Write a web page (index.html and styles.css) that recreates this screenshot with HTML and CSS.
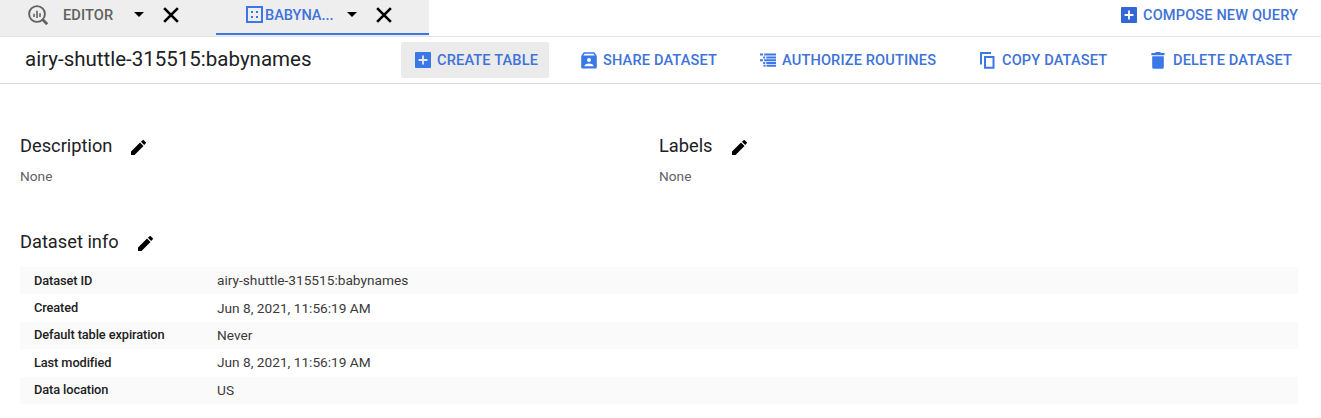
FILE: index.html
```html
<!DOCTYPE html>
<html lang="en">
<head>
<meta charset="utf-8">
<title>Dataset details</title>
<link rel="stylesheet" href="styles.css">
</head>
<body>
<svg class="sprite" width="0" height="0" aria-hidden="true">
  <symbol id="add" viewBox="3 3 18 18"><path fill-rule="evenodd" d="M4 3h16a1 1 0 0 1 1 1v16a1 1 0 0 1-1 1H4a1 1 0 0 1-1-1V4a1 1 0 0 1 1-1zM11 7v4H7v2h4v4h2v-4h4v-2h-4V7z"/></symbol>
  <symbol id="close" viewBox="5 5 14 14"><path d="M6 6l12 12M18 6L6 18" fill="none" stroke="currentColor" stroke-width="2.3"/></symbol>
  <symbol id="pencil" viewBox="3 3 18 18"><path d="M3 16.8V21h4.2L18 10.2 13.8 6 3 16.8zM20.71 7.04a1 1 0 0 0 0-1.41l-2.34-2.34a1 1 0 0 0-1.41 0L14.9 5.2l3.9 3.9 1.91-2.06z"/></symbol>
</svg>
<header class="tabbar">
  <div class="tab editor">
    <svg class="i-query" viewBox="0 0 20 20"><circle cx="9" cy="9" r="7.9" fill="none" stroke="currentColor" stroke-width="1.9"/><path d="M14.3 14.3l4.9 4.9" stroke="currentColor" stroke-width="2.7"/><path d="M6 8.8v3.1M9 5.8v7.2M12 8.2v3.7" stroke="currentColor" stroke-width="1.6"/></svg>
    <span class="label">EDITOR</span>
    <i class="caret"></i>
    <svg class="i-close"><use href="#close"/></svg>
  </div>
  <div class="tab active">
    <svg class="i-grid" viewBox="0 0 17 17"><rect x="1" y="1" width="15" height="15" fill="none" stroke="currentColor" stroke-width="2"/><path d="M5 5h2v2H5zM10 5h2v2h-2zM5 10h2v2H5zM10 10h2v2h-2z"/></svg>
    <span class="label">BABYNA...</span>
    <i class="caret"></i>
    <svg class="i-close"><use href="#close"/></svg>
  </div>
  <div class="compose"><svg class="i-add dark"><use href="#add"/></svg><span>COMPOSE NEW QUERY</span></div>
</header>
<div class="toolbar">
  <h1>airy-shuttle-315515:babynames</h1>
  <div class="btn create"><svg class="i-add"><use href="#add"/></svg><span>CREATE TABLE</span></div>
  <div class="btn share"><svg class="i-share" viewBox="0 0 16 17"><path fill-rule="evenodd" d="M1.2 3.6h13.6a1 1 0 0 1 1 1v10.6a1.4 1.4 0 0 1-1.4 1.4H1.6a1.4 1.4 0 0 1-1.4-1.4V4.6a1 1 0 0 1 1-1zM8 6a2 2 0 1 0 0 4 2 2 0 0 0 0-4zM3.6 14.2h8.8v-.7c0-1.3-2.8-2-4.4-2s-4.4.7-4.4 2z"/><path d="M1 4.2L3.2 1h9.6L15 4.2" fill="none" stroke="currentColor" stroke-width="1.5" stroke-linejoin="round"/></svg><span>SHARE DATASET</span></div>
  <div class="btn auth"><svg class="i-auth" viewBox="0 0 16 14"><path d="M0 .5h3v2H0zM4.2.5H16v2H4.2zM3.2 3.5h2v2h-2zM6.3 3.5H16v2H6.3zM0 6.3h3v2H0zM4.2 6.3H16v2H4.2zM3.2 9h2v2h-2zM6.3 9H16v2H6.3zM3.5 11.8h2v2h-2zM6.5 11.8H16v2H6.5z"/></svg><span>AUTHORIZE ROUTINES</span></div>
  <div class="btn copy"><svg class="i-copy" viewBox="0 0 15 17"><path d="M1 12.5V1h10M5 5h8.5V15.8H5z" fill="none" stroke="currentColor" stroke-width="2"/></svg><span>COPY DATASET</span></div>
  <div class="btn delete"><svg class="i-trash" viewBox="0 0 14 17"><path d="M1.2 4.2h11.6v11.1a1.5 1.5 0 0 1-1.5 1.5H2.7a1.5 1.5 0 0 1-1.5-1.5zM4.4 0h5.2v1h4v2.2H.4V1h4z"/></svg><span>DELETE DATASET</span></div>
</div>
<main>
  <div class="columns">
    <section><h2><span>Description</span><svg class="i-pencil"><use href="#pencil"/></svg></h2><p>None</p></section>
    <section><h2><span>Labels</span><svg class="i-pencil"><use href="#pencil"/></svg></h2><p>None</p></section>
  </div>
  <h2 class="info"><span>Dataset info</span><svg class="i-pencil"><use href="#pencil"/></svg></h2>
  <dl>
    <div><dt>Dataset ID</dt><dd>airy-shuttle-315515:babynames</dd></div>
    <div><dt>Created</dt><dd>Jun 8, 2021, 11:56:19 AM</dd></div>
    <div><dt>Default table expiration</dt><dd>Never</dd></div>
    <div><dt>Last modified</dt><dd>Jun 8, 2021, 11:56:19 AM</dd></div>
    <div><dt>Data location</dt><dd>US</dd></div>
  </dl>
</main>
</body>
</html>
```
FILE: styles.css
```css
* { box-sizing: border-box; }
body { margin: 0; height: 418px; overflow: hidden; background: #fff; color: #202124; font-family: Roboto, "Liberation Sans", sans-serif; white-space: nowrap; }
svg { display: block; flex: none; fill: currentColor; }
.sprite { position: absolute; }
h1, h2, p, dl, dd, dt { margin: 0; font-weight: 400; }

.tabbar { display: flex; height: 37px; border-bottom: 1px solid #e4e4e4; font-size: 14.6px; font-weight: 500; letter-spacing: 0.12px; }
.tab { display: flex; align-items: center; height: 36px; padding-bottom: 7px; background: #eee; color: #000; }
.editor { width: 216px; padding-left: 28px; }
.editor .label { width: 71px; margin-left: 15px; color: #616161; }
.i-query { width: 20px; height: 20px; color: #616161; }
.caret { width: 10px; border: 5px solid transparent; border-top-color: #000; border-bottom: 0; }
.i-close { width: 16px; height: 16px; margin-left: 19px; }
.active { width: 213px; height: 35px; padding-left: 30px; padding-bottom: 4px; border-bottom: 2px solid #3b78e7; box-shadow: 0 1px #eee; }
.active .label { width: 82px; margin-left: 2px; color: #3f73d8; letter-spacing: -0.05px; }
.i-grid { width: 17px; height: 17px; color: #3b78e7; }
.compose { display: flex; align-items: center; height: 29px; margin-left: 692px; color: #3f73d8; }
.i-add { width: 16px; height: 16px; margin-right: 6px; color: #3b78e7; }
.i-add.dark { color: #3367d6; }

.toolbar { display: flex; align-items: center; height: 47px; border-bottom: 1px solid #d9d9d9; }
h1 { width: 376px; height: 26px; margin-left: 25px; font-size: 20.5px; line-height: 24px; }
.btn { display: flex; align-items: center; height: 36px; color: #3f73d8; font-size: 14.6px; font-weight: 500; letter-spacing: 0.14px; }
.btn svg { color: #3b78e7; }
.create { width: 148px; padding-left: 14px; border-radius: 2px; background: #ebebeb; }
.share { width: 179px; margin-left: 32px; }
.i-share { width: 16px; height: 17px; margin-right: 6px; }
.auth { width: 220px; }
.i-auth { width: 16px; height: 14px; margin-right: 6px; }
.copy { width: 171px; }
.i-copy { width: 15px; height: 17px; margin-right: 7px; }
.i-trash { width: 14px; height: 17px; margin-right: 8px; }

main { padding: 49px 23px 0 20px; }
.columns { display: grid; grid-template-columns: 639px 1fr; }
h2 { display: flex; align-items: center; height: 26px; font-size: 18.25px; }
h2 span { padding-bottom: 1px; }
.i-pencil { width: 15px; height: 15px; margin: 2px 0 0 19px; color: #000; }
p { margin-top: 7px; color: #616161; font-size: 13.7px; line-height: 20px; }
.info { margin-top: 43px; }
dl { margin-top: 12px; }
dl div { display: flex; align-items: center; height: 27.4px; padding: 0 0 1px 14px; font-size: 13.7px; }
dl div:nth-child(odd) { background: #fafafa; }
dt { width: 183px; color: #212121; font-size: 12.8px; font-weight: 500; letter-spacing: -0.1px; }
dd { color: #3a3a3a; }
```
